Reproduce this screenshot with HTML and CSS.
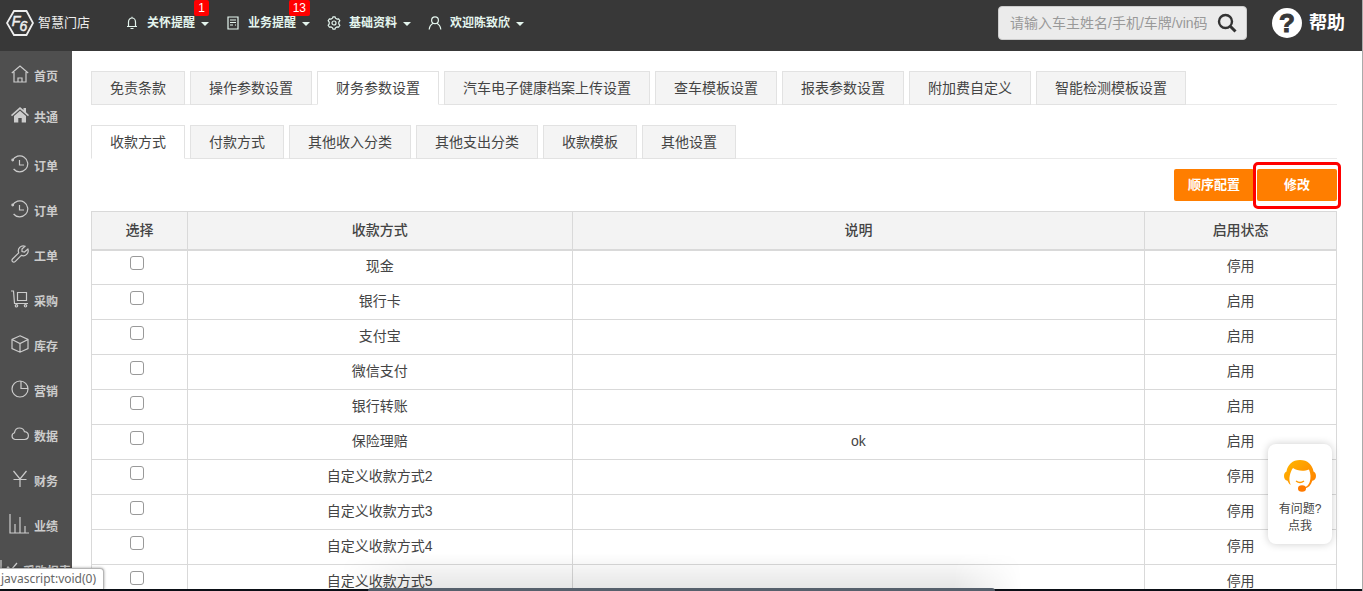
FILE: index.html
```html
<!DOCTYPE html>
<html lang="zh-CN">
<head>
<meta charset="utf-8">
<title>智慧门店</title>
<link rel="stylesheet" href="styles.css">
</head>
<body>
<header class="topbar">
  <a class="brand" href="#">
    <svg class="brand-mark" viewBox="0 0 28 26" width="28" height="26"><path d="M8 1H20.500L27 13 20.500 25H8L1 13Z" fill="none" stroke="currentColor" stroke-width="1.800"/><text x="10" y="16" text-anchor="middle" class="mark-text">F</text><text x="17.500" y="21" text-anchor="middle" class="mark-text">6</text></svg>
    <span>智慧门店</span>
  </a>
  <nav class="menu">
    <button class="menu-item" type="button">
      <svg class="line" viewBox="0 0 14 14"><path d="M2 10.500h10M3.500 10V6a3.500 4 0 0 1 7 0v4M7 2V.8M5.500 12.500h3"/></svg>
      <span>关怀提醒</span><i class="caret"></i><b class="badge">1</b>
    </button>
    <button class="menu-item" type="button">
      <svg class="line" viewBox="0 0 14 14"><path d="M2 1h10v12H2zM4 4h6M4 6.500h6M4 9h3M9 9h1"/></svg>
      <span>业务提醒</span><i class="caret"></i><b class="badge">13</b>
    </button>
    <button class="menu-item" type="button">
      <svg class="line" viewBox="0 0 14 14"><path d="M5.500 2.200 6 .8h2l.5 1.400 1.500.9 1.600-.3 1.200 2-1 1.200v2l1 1.200-1.200 2-1.600-.3-1.500.9-.5 1.400H6l-.5-1.400-1.500-.9-1.600.3-1.200-2 1-1.200V6l-1-1.200 1.200-2 1.600.3z"/><circle cx="7" cy="7" r="2"/></svg>
      <span>基础资料</span><i class="caret"></i>
    </button>
    <button class="menu-item" type="button">
      <svg class="line" viewBox="0 0 14 14"><circle cx="7" cy="4.200" r="3.400"/><path d="M1.200 13.500C1.500 10 3 8.500 5.200 7.300M12.800 13.500C12.500 10 11 8.500 8.800 7.300"/></svg>
      <span>欢迎陈致欣</span><i class="caret"></i>
    </button>
  </nav>
  <form class="search">
    <input type="text" aria-label="搜索" placeholder="请输入车主姓名/手机/车牌/vin码">
    <button type="button" aria-label="搜索"><svg viewBox="0 0 20 20" width="20" height="20"><circle cx="8.500" cy="8.500" r="6.500" fill="none" stroke="#333" stroke-width="2.400"/><path d="m13.500 13.500 5 5" stroke="#333" stroke-width="3"/></svg></button>
  </form>
  <a class="help" href="#"><svg viewBox="0 0 30 30" width="30" height="30"><circle cx="15" cy="15" r="15" fill="#fff"/><text x="15" y="24" text-anchor="middle" class="help-mark">?</text></svg><span>帮助</span></a>
</header>

<div class="body">
  <nav class="sidebar">
    <a href="#"><svg class="line" viewBox="0 0 18 18"><path d="M.8 8 9 1l8.200 7M3 7v10h12V7M7 17v-4h4v4"/></svg>首页</a>
    <a href="#" class="shared"><svg viewBox="0 0 18 18"><path fill="currentColor" d="M9 1 0 9l1 1.200L9 3.300l8 6.900L18 9l-3-2.700V2h-2.500v2zM9 4.700 3 10v6.500h4.300V12h3.400v4.500H15V10z"/></svg>共通</a>
    <a href="#"><svg class="line" viewBox="0 0 18 18"><path d="M1.500 5.500A8 8 0 1 1 2.600 14M8.500 5v5H13"/><circle cx="1.700" cy="5" r=".8"/></svg>订单</a>
    <a href="#"><svg class="line" viewBox="0 0 18 18"><path d="M1.500 5.500A8 8 0 1 1 2.600 14M8.500 5v5H13"/><circle cx="1.700" cy="5" r=".8"/></svg>订单</a>
    <a href="#"><svg class="line" viewBox="0 0 18 18"><path d="M14 1.200a5 5 0 0 0-6.300 6.600L1.500 14a1.800 1.800 0 0 0 2.600 2.600l6.200-6.200a5 5 0 0 0 6.600-6.300L13.500 7 11 6.500V4z"/></svg>工单</a>
    <a href="#"><svg class="line" viewBox="0 0 18 18"><path d="M0 1h2.500l1 12.500H17M6.500 2.500h9v8h-9z"/><circle cx="5.500" cy="15.800" r="1.200"/><circle cx="14.500" cy="15.800" r="1.200"/></svg>采购</a>
    <a href="#"><svg class="line" viewBox="0 0 18 18"><path d="m9 .8 8 3.700v9L9 17.200l-8-3.700v-9zM1 4.500 9 8.500l8-4M9 8.500v8.700"/></svg>库存</a>
    <a href="#"><svg class="line" viewBox="0 0 18 18"><circle cx="9" cy="9" r="8"/><path d="M10 1v7.500h7"/></svg>营销</a>
    <a href="#"><svg class="line" viewBox="0 0 18 18"><path d="M4 14.500a3.500 3.500 0 0 1-.5-6.800C4 4.500 6 3 8.500 3c2.800 0 4.300 1.600 5 3.700 2.500.3 3.900 1.800 3.900 3.900 0 2.200-1.600 3.900-3.900 3.900z"/></svg>数据</a>
    <a href="#"><svg class="line" viewBox="0 0 18 18"><path d="m2.500 1 6.500 8 6.500-8M9 9v8M2.500 9.500h13"/></svg>财务</a>
    <a href="#"><svg class="line chart" viewBox="0 0 20 20"><path d="M1 0v19h19M6 19v-9M11 19V3M16 19v-7"/></svg>业绩</a>
    <a href="#" class="wide"><svg class="line" viewBox="0 0 18 18"><path d="M1 0v17h17M4 12l4-5 3 3 6-7"/></svg>采购报表</a>
  </nav>

  <main class="content">
    <nav class="tabs">
      <a href="#">免责条款</a><a href="#">操作参数设置</a><a href="#" class="active">财务参数设置</a><a href="#">汽车电子健康档案上传设置</a><a href="#">查车模板设置</a><a href="#">报表参数设置</a><a href="#">附加费自定义</a><a href="#">智能检测模板设置</a>
    </nav>
    <nav class="tabs">
      <a href="#" class="active">收款方式</a><a href="#">付款方式</a><a href="#">其他收入分类</a><a href="#">其他支出分类</a><a href="#">收款模板</a><a href="#">其他设置</a>
    </nav>
    <div class="actions">
      <button type="button">顺序配置</button>
      <button type="button" class="marked">修改</button>
    </div>
    <table class="grid">
      <colgroup><col class="c-pick"><col class="c-name"><col class="c-note"><col class="c-state"></colgroup>
      <thead><tr><th>选择</th><th>收款方式</th><th>说明</th><th>启用状态</th></tr></thead>
      <tbody>
        <tr><td><input type="checkbox" aria-label="现金"></td><td>现金</td><td></td><td>停用</td></tr>
        <tr><td><input type="checkbox" aria-label="银行卡"></td><td>银行卡</td><td></td><td>启用</td></tr>
        <tr><td><input type="checkbox" aria-label="支付宝"></td><td>支付宝</td><td></td><td>启用</td></tr>
        <tr><td><input type="checkbox" aria-label="微信支付"></td><td>微信支付</td><td></td><td>启用</td></tr>
        <tr><td><input type="checkbox" aria-label="银行转账"></td><td>银行转账</td><td></td><td>启用</td></tr>
        <tr><td><input type="checkbox" aria-label="保险理赔"></td><td>保险理赔</td><td>ok</td><td>启用</td></tr>
        <tr><td><input type="checkbox" aria-label="自定义收款方式2"></td><td>自定义收款方式2</td><td></td><td>停用</td></tr>
        <tr><td><input type="checkbox" aria-label="自定义收款方式3"></td><td>自定义收款方式3</td><td></td><td>停用</td></tr>
        <tr><td><input type="checkbox" aria-label="自定义收款方式4"></td><td>自定义收款方式4</td><td></td><td>停用</td></tr>
        <tr><td><input type="checkbox" aria-label="自定义收款方式5"></td><td>自定义收款方式5</td><td></td><td>停用</td></tr>
      </tbody>
    </table>
  </main>
</div>

<button class="support" type="button">
  <svg viewBox="0 0 32 32" width="32" height="32">
    <defs><linearGradient id="hair" x1="0" y1="0" x2="1" y2="1"><stop offset="0" stop-color="#ffb900"/><stop offset="1" stop-color="#ff7a00"/></linearGradient></defs>
    <path fill="url(#hair)" d="M16 0C8.500 0 3.500 4.800 2.500 11.500.8 12.300 0 14 0 16c0 2.600 1.300 4.500 3.500 4.800.8 2 1.800 3.200 3.200 4.200C5.500 22 5 19 5.800 15.500c.6-2.900 1.700-5.500 3.200-7.500 4.500 3.300 11 3.500 16 1.500 1.800 4.200 2 8.500.7 12.500-.8 2.700-2.700 4.600-5.700 5.500v1.300c4.300-.8 7-3.500 8.300-8 2.300-.3 3.700-2.200 3.700-4.800 0-2-.8-3.700-2.500-4.500C28.500 4.800 23.500 0 16 0z"/>
    <path d="M12 21q4 3 8 0" fill="none" stroke="#ff9a00" stroke-width="1.300"/>
    <ellipse cx="18" cy="28.500" rx="4" ry="3.300" fill="#ff7a00"/>
  </svg>
  <span>有问题?</span><span>点我</span>
</button>
<div class="dock-shadow"></div>
<div class="desktop"><div class="dock"></div></div>
<div class="status">javascript:void(0)</div>
</body>
</html>
```
FILE: styles.css
```css
* { box-sizing: border-box; }
body {
  margin: 0;
  height: 100vh;
  overflow: hidden;
  position: relative;
  display: flex;
  flex-direction: column;
  background: #fff;
  border-right: 1px solid #aaa;
  font: 14px/20px "Liberation Sans", "Noto Sans CJK SC", sans-serif;
  color: #444;
}
a { color: inherit; text-decoration: none; }
button { font: inherit; color: inherit; border: 0; padding: 0; background: none; }
.line { fill: none; stroke: currentColor; stroke-width: 1.2; }

.topbar {
  flex: none;
  height: 51px;
  padding: 0 17px 6px 6px;
  display: flex;
  align-items: center;
  background: #383838;
  color: #fff;
}
.brand { display: flex; align-items: center; gap: 4px; width: 119px; font-size: 13px; color: #eee; white-space: nowrap; }
.brand-mark { flex: none; }
.mark-text { font: italic 14px "Liberation Sans", sans-serif; fill: #eee; stroke: #eee; stroke-width: 0.5; }
.menu { display: flex; gap: 17px; }
.menu-item {
  position: relative;
  display: flex;
  align-items: center;
  font-size: 12px;
  font-weight: 700;
  color: #e4f5ee;
}
.menu-item svg { width: 14px; height: 14px; margin-right: 8px; }
.caret { margin: 3px 0 0 6px; border: 4px solid transparent; border-top-color: #e4f5ee; border-bottom: 0; }
.badge {
  position: absolute;
  right: 0;
  bottom: 17px;
  padding: 0 4px;
  border-radius: 2px;
  background: #f00;
  color: #fff;
  font-size: 12px;
  font-weight: 400;
  line-height: 16px;
}
.search {
  width: 249px;
  height: 34px;
  margin: 1px 25px 0 auto;
  padding: 0 9px 0 11px;
  display: flex;
  align-items: center;
  background: #ebebeb;
  border: 1px solid #ccc;
  border-radius: 4px;
}
.search input { flex: 1; min-width: 0; padding: 0; border: 0; background: none; font: inherit; }
.search input::placeholder { color: #999; }
.search button { height: 20px; }
.help { display: flex; align-items: center; gap: 7px; font-size: 18px; font-weight: 700; }
.help-mark { font: bold 26px "Liberation Sans", sans-serif; fill: #383838; stroke: #383838; }

.body { flex: 1; min-height: 0; display: flex; }
.sidebar { flex: none; width: 72px; padding-top: 2px; overflow: hidden; background: #4f4f4f; color: #ccc; font-size: 12px; font-weight: 700; }
.sidebar a { display: flex; align-items: center; height: 45px; padding: 2px 0 0 11px; gap: 5px; white-space: nowrap; }
.sidebar svg { flex: none; width: 18px; height: 18px; margin-bottom: 6px; }
.sidebar .chart { width: 20px; height: 20px; margin-left: -2px; }
.sidebar .shared { height: 37px; margin-bottom: 8px; }
.sidebar .wide { padding-left: 0; }

.content { flex: 1; min-width: 0; overflow: hidden; padding: 20px 25px 0 19px; }
.tabs { display: flex; gap: 5px; margin-bottom: 20px; border-bottom: 1px solid #eaeaea; }
.tabs a { height: 34px; margin-bottom: -1px; padding: 0 18px; border: 1px solid #e2e2e2; background: #f4f4f4; line-height: 32px; white-space: nowrap; }
.tabs .active { background: #fff; border-bottom-color: #fff; }
.tabs + .tabs { margin-bottom: 10px; }
.actions { display: flex; justify-content: flex-end; gap: 3px; margin-bottom: 10px; }
.actions button { width: 80px; height: 32px; border-radius: 2px; background: #ff7e00; color: #fff; font-size: 13px; font-weight: 700; }
.actions .marked { position: relative; }
.marked::after { content: ""; position: absolute; inset: -7px -4px -8px; border: 3px solid #f00; border-radius: 5px; }

.grid { width: 100%; table-layout: fixed; border-collapse: collapse; }
.c-pick { width: 7.7%; }
.c-name { width: 30.9%; }
.c-note { width: 46%; }
.c-state { width: 15.4%; }
.grid th, .grid td { padding: 0; border: 1px solid #d9d9d9; text-align: center; }
.grid th { height: 38px; background: #f3f3f3; border-bottom-width: 2px; font-weight: 500; }
.grid td { height: 35px; padding-bottom: 2px; }
.grid input {
  appearance: none;
  display: block;
  width: 14px;
  height: 14px;
  margin: 0 auto 6px;
  border: 1px solid #999;
  border-radius: 3px;
  background: #fff;
}
.grid td:first-child { padding-right: 5px; }

.support {
  position: absolute;
  right: 30px;
  bottom: 47px;
  width: 64px;
  height: 100px;
  display: flex;
  flex-direction: column;
  align-items: center;
  border-radius: 8px;
  background: #fff;
  box-shadow: 0 0 8px rgba(0, 0, 0, .2);
  font-size: 12px;
  line-height: 17px;
}
.support svg { margin: 16px 0 9px; }
.desktop { position: absolute; left: 0; right: -1px; bottom: 0; height: 2px; background: #0b0f16; }
.dock { width: 46%; height: 3px; margin: -1px 0 0 27%; border-radius: 3px 3px 0 0; background: #56606c; }
.dock-shadow { position: absolute; left: 25%; right: 25%; bottom: 2px; height: 36px; background: linear-gradient(transparent, rgba(0, 0, 0, .1)); mask-image: linear-gradient(90deg, transparent, #000 10%, #000 90%, transparent); pointer-events: none; }
.status {
  position: absolute;
  left: 0;
  bottom: 2px;
  height: 21px;
  padding: 0 7px 0 1px;
  border: 1px solid #b5b5b5;
  border-left: 0;
  border-bottom: 0;
  border-radius: 0 4px 0 0;
  background: #fff;
  box-shadow: 0 0 3px rgba(0, 0, 0, .4);
  color: #666;
  font: 12px/20px "Noto Sans", sans-serif;
}
```
